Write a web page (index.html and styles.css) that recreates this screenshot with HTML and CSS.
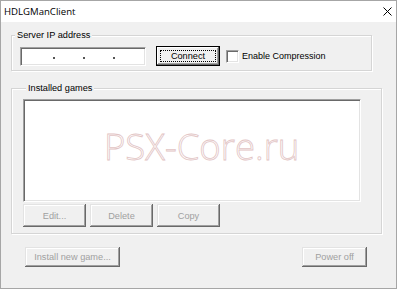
FILE: index.html
```html
<!DOCTYPE html>
<html>
<head>
    <title>HDLGManClient</title>
    <link rel="stylesheet" href="styles.css">
</head>
<body>
    <div class="window">
        <div class="titlebar">
            <span class="title">HDLGManClient</span>
            <svg class="close" width="9" height="9" viewBox="0 0 9 9">
                <path d="M0.5 0.5 L8.5 8.5 M8.5 0.5 L0.5 8.5" stroke="#000" stroke-width="1" fill="none"/>
            </svg>
        </div>

        <div class="client">
            <fieldset class="group group-server">
                <legend>Server IP address</legend>
                <div class="group-row">
                    <div class="ip-box">
                        <span class="dot"></span>
                        <span class="dot"></span>
                        <span class="dot"></span>
                    </div>
                    <button class="btn btn-default"><span class="focus">Connect</span></button>
                    <label class="check"><span class="check-box"></span>Enable Compression</label>
                </div>
            </fieldset>

            <fieldset class="group group-games">
                <legend>Installed games</legend>
                <div class="list-box"></div>
                <div class="list-buttons">
                    <button class="btn btn-small" disabled>Edit...</button>
                    <button class="btn btn-small" disabled>Delete</button>
                    <button class="btn btn-small" disabled>Copy</button>
                </div>
            </fieldset>

            <div class="bottom-row">
                <button class="btn btn-install" disabled>Install new game...</button>
                <button class="btn btn-power" disabled>Power off</button>
            </div>
        </div>

        <div class="watermark">PSX-Core.ru</div>
    </div>
</body>
</html>
```

FILE: styles.css
```css
body, html {
    margin: 0;
    background-color: #fff;
    font-family: "Liberation Sans", Arial, sans-serif;
}

.window {
    position: relative;
    width: 397px;
    height: 289px;
    box-sizing: border-box;
    border: 1px solid #a6a6a6;
    background-color: #f0f0f0;
    overflow: hidden;
}

/* Title bar */
.titlebar {
    height: 21px;
    background-color: #fff;
    display: flex;
    align-items: center;
    justify-content: space-between;
    padding: 0 4px 0 3px;
}

.title {
    font-family: "Open Sans", "Liberation Sans", sans-serif;
    font-size: 9.6px;
    color: #000;
}

.close {
    display: block;
}

/* Client area */
.client {
    padding: 0 0 0 10px;
    font-size: 9px;
    color: #000;
}

.group {
    margin: 0;
    padding: 0;
    box-sizing: border-box;
    border: 1px solid #d5d5d5;
    box-shadow: 1px 1px 0 #fff, inset 1px 1px 0 #fff;
    min-inline-size: 0;
}

.group legend {
    margin-left: 3px;
    padding: 0 2px;
    line-height: 11px;
    font-size: 9.2px;
    background-color: #f0f0f0;
}

.group-server {
    margin-top: 8px;
    width: 361px;
}

.group-row {
    display: flex;
    align-items: center;
    padding: 5px 0 4px 8px;
}

.ip-box {
    width: 126px;
    height: 19px;
    box-sizing: border-box;
    background-color: #fff;
    border-top: 1px solid #a0a0a0;
    border-left: 1px solid #a0a0a0;
    border-right: 1px solid #fff;
    border-bottom: 1px solid #fff;
    box-shadow: inset 1px 1px 0 #696969, inset -1px -1px 0 #e3e3e3;
    display: flex;
    align-items: center;
    padding-left: 32px;
    gap: 28px;
}

.dot {
    width: 2px;
    height: 2px;
    background-color: #555;
    margin-top: 3px;
}

.btn {
    font-family: "Liberation Sans", Arial, sans-serif;
    font-size: 9.2px;
    color: #000;
    background-color: #f0f0f0;
    border: none;
    padding: 0;
    box-sizing: border-box;
    box-shadow: inset -1px -1px 0 #696969, inset 1px 1px 0 #e3e3e3,
                inset -2px -2px 0 #a0a0a0, inset 2px 2px 0 #fff;
}

.btn:disabled {
    color: #a0a0a0;
}

.btn-default {
    width: 64px;
    height: 20px;
    margin-left: 10px;
    border: 1px solid #000;
    padding: 3px;
    box-shadow: inset -1px -1px 0 #696969, inset 1px 1px 0 #fff,
                inset -2px -2px 0 #a0a0a0;
}

.focus {
    display: block;
    height: 100%;
    box-sizing: border-box;
    border: 1px dotted #000;
    line-height: 10px;
}

.check {
    display: flex;
    align-items: center;
    margin-left: 6px;
    gap: 3px;
    font-size: 9px;
}

.check-box {
    width: 13px;
    height: 13px;
    box-sizing: border-box;
    background-color: #fff;
    border-top: 1px solid #a0a0a0;
    border-left: 1px solid #a0a0a0;
    border-right: 1px solid #fff;
    border-bottom: 1px solid #fff;
    box-shadow: inset 1px 1px 0 #696969, inset -1px -1px 0 #e3e3e3;
}

.group-games {
    margin-top: 12px;
    width: 371px;
    padding: 5px 0 6px 11px;
}

.list-box {
    width: 338px;
    height: 103px;
    box-sizing: border-box;
    background-color: #fff;
    border-top: 1px solid #a0a0a0;
    border-left: 1px solid #a0a0a0;
    border-right: 1px solid #fff;
    border-bottom: 1px solid #fff;
    box-shadow: inset 1px 1px 0 #696969, inset -1px -1px 0 #e3e3e3;
}

.list-buttons {
    display: flex;
    gap: 4px;
    margin-top: 2px;
}

.btn-small {
    width: 63px;
    height: 23px;
}

.bottom-row {
    display: flex;
    justify-content: space-between;
    width: 342px;
    margin: 13px 0 0 14px;
}

.btn-install {
    width: 95px;
    height: 20px;
}

.btn-power {
    width: 65px;
    height: 20px;
}

/* Site watermark laid over the dialog */
.watermark {
    position: absolute;
    left: 103px;
    top: 120px;
    font-family: "Open Sans", sans-serif;
    font-size: 36.5px;
    font-weight: 300;
    color: transparent;
    -webkit-text-stroke: 0.8px #e2c4c4;
    pointer-events: none;
}
```
